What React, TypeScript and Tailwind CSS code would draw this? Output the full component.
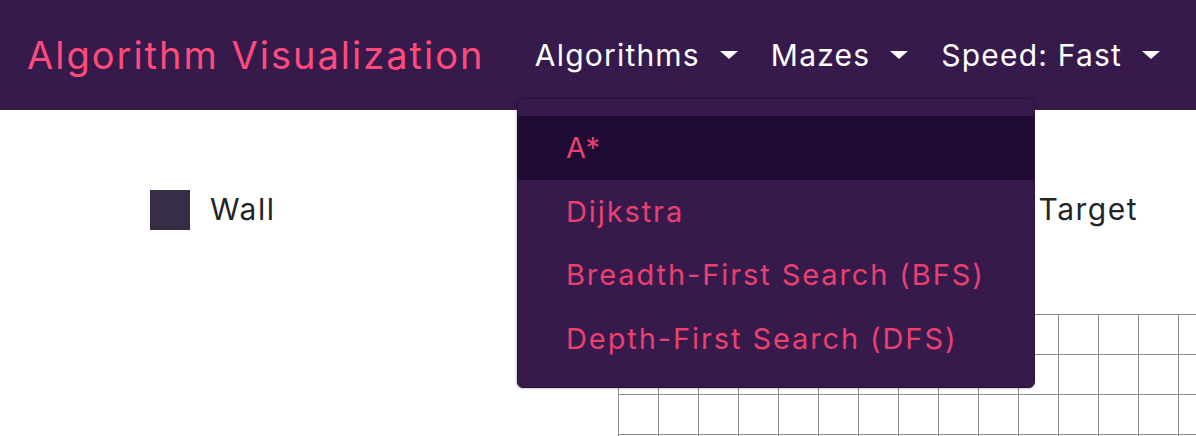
import React from "react";

const font = { fontFamily: "Inter, 'Noto Sans', sans-serif" };

const algorithms = ["A*", "Dijkstra", "Breadth-First Search (BFS)", "Depth-First Search (DFS)"];

function Caret() {
    return (
        <span className="ml-[20px] inline-block h-0 w-0 border-x-[9px] border-t-[8px] border-x-transparent border-t-white" />
    );
}

function NavItem({ label }: { label: string }) {
    return (
        <button className="flex items-center text-[30px] tracking-[1.2px] text-white">
            {label}
            <Caret />
        </button>
    );
}

function LegendItem({ color, label }: { color: string; label: string }) {
    return (
        <div className="flex items-center">
            <span className={`h-[40px] w-[40px] ${color}`} />
            <span className="ml-[20px] text-[30px] tracking-[1.5px] text-[#212529]">{label}</span>
        </div>
    );
}

export default function App() {
    const cols = Array.from({ length: 15 });
    const rows = Array.from({ length: 4 });

    return (
        <div className="relative h-[436px] w-full overflow-hidden bg-white" style={font}>
            {/* Navbar */}
            <nav className="flex h-[110px] items-center justify-between bg-[#371a4c] pl-[27px] pr-[36px]">
                <span className="text-[38px] tracking-[2px] text-[#ff4a7c]">Algorithm Visualization</span>
                <div className="flex items-center gap-[33px]">
                    <NavItem label="Algorithms" />
                    <NavItem label="Mazes" />
                    <NavItem label="Speed: Fast" />
                </div>
            </nav>

            {/* Legend */}
            <div className="flex items-center justify-between pl-[150px] pr-[58px] pt-[77px]">
                <LegendItem color="bg-[#372d47]" label="Wall" />
                <LegendItem color="bg-[#ff4a7c]" label="Target" />
            </div>

            {/* Grid */}
            <div className="ml-[618px] mt-[82px] border-l border-t border-[#8f8f8f]">
                {rows.map((_, r) => (
                    <div key={r} className="flex">
                        {cols.map((_, c) => (
                            <div key={c} className="h-[40px] w-[40px] shrink-0 border-b border-r border-[#8f8f8f]" />
                        ))}
                    </div>
                ))}
            </div>

            {/* Algorithms dropdown */}
            <div className="absolute left-[517px] top-[98px] w-[518px] rounded-md border border-[#2a1240] bg-[#371a4c] py-[17px] shadow-[-1px_1px_2px_rgba(0,0,0,0.2)]">
                {algorithms.map((name, i) => (
                    <div
                        key={name}
                        className={`flex h-[63.5px] items-center pl-[48px] text-[29px] tracking-[1.9px] text-[#e8406f] ${i === 0 ? "bg-[#200b34]" : ""}`}
                    >
                        {name}
                    </div>
                ))}
            </div>
        </div>
    );
}
